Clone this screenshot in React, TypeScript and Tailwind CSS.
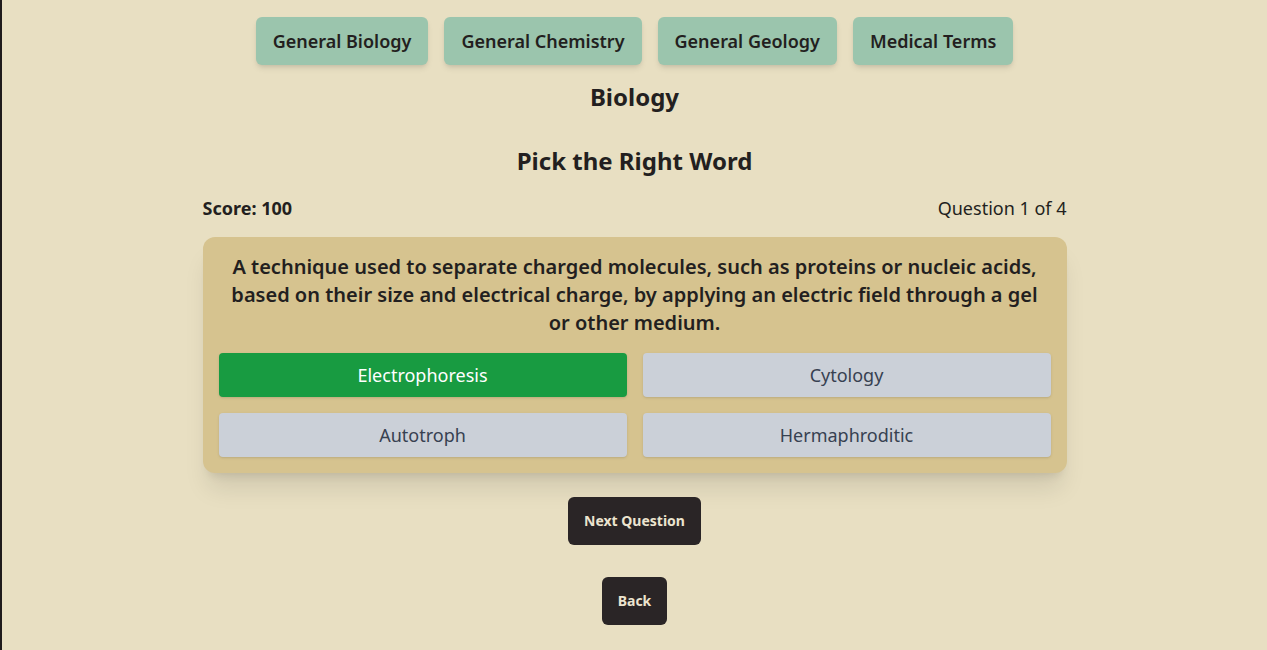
const SUBJECTS = ["General Biology", "General Chemistry", "General Geology", "Medical Terms"];

const OPTIONS = [
  { label: "Electrophoresis", correct: true },
  { label: "Cytology", correct: false },
  { label: "Autotroph", correct: false },
  { label: "Hermaphroditic", correct: false },
];

export default function App() {
  return (
    <div
      className="min-h-[650px] border-l-2 border-[#1f1b1c] bg-[#e8dfc2] text-[#231f20]"
      style={{ fontFamily: '"Noto Sans", "Open Sans", sans-serif' }}
    >
      <div className="flex flex-col items-center pt-[17px]">
        {/* subject tabs */}
        <nav className="flex gap-4">
          {SUBJECTS.map((s) => (
            <button
              key={s}
              className="h-12 rounded-md bg-[#9bc5ad] px-[17px] text-lg font-semibold text-[#231f20] shadow-md"
            >
              {s}
            </button>
          ))}
        </nav>

        <h2 className="mt-4 text-2xl leading-8 font-bold">Biology</h2>
        <h1 className="mt-8 text-2xl leading-8 font-bold">Pick the Right Word</h1>

        <div className="mt-[17px] w-[864px]">
          <div className="flex items-center justify-between text-lg leading-7">
            <span className="font-bold">Score: 100</span>
            <span>Question 1 of 4</span>
          </div>

          {/* question card */}
          <div className="mt-[15px] rounded-xl bg-[#d6c38f] p-4 shadow-xl">
            <p className="mb-4 text-center text-xl leading-7 font-semibold">
              A technique used to separate charged molecules, such as proteins or nucleic acids, based on their size
              and electrical charge, by applying an electric field through a gel or other medium.
            </p>
            <div className="grid grid-cols-2 gap-4">
              {OPTIONS.map((o) => (
                <button
                  key={o.label}
                  className={
                    o.correct
                      ? "h-11 rounded bg-[#189b41] text-lg text-white shadow-sm"
                      : "h-11 rounded bg-[#cbd0d8] text-lg text-[#374151] shadow-sm"
                  }
                >
                  {o.label}
                </button>
              ))}
            </div>
          </div>
        </div>

        <button className="mt-6 h-12 rounded-md bg-[#2a2526] px-4 text-sm font-bold text-[#ece4cf]">
          Next Question
        </button>
        <button className="mt-8 h-12 rounded-md bg-[#2a2526] px-4 text-sm font-bold text-[#ece4cf]">
          Back
        </button>
      </div>
    </div>
  );
}
